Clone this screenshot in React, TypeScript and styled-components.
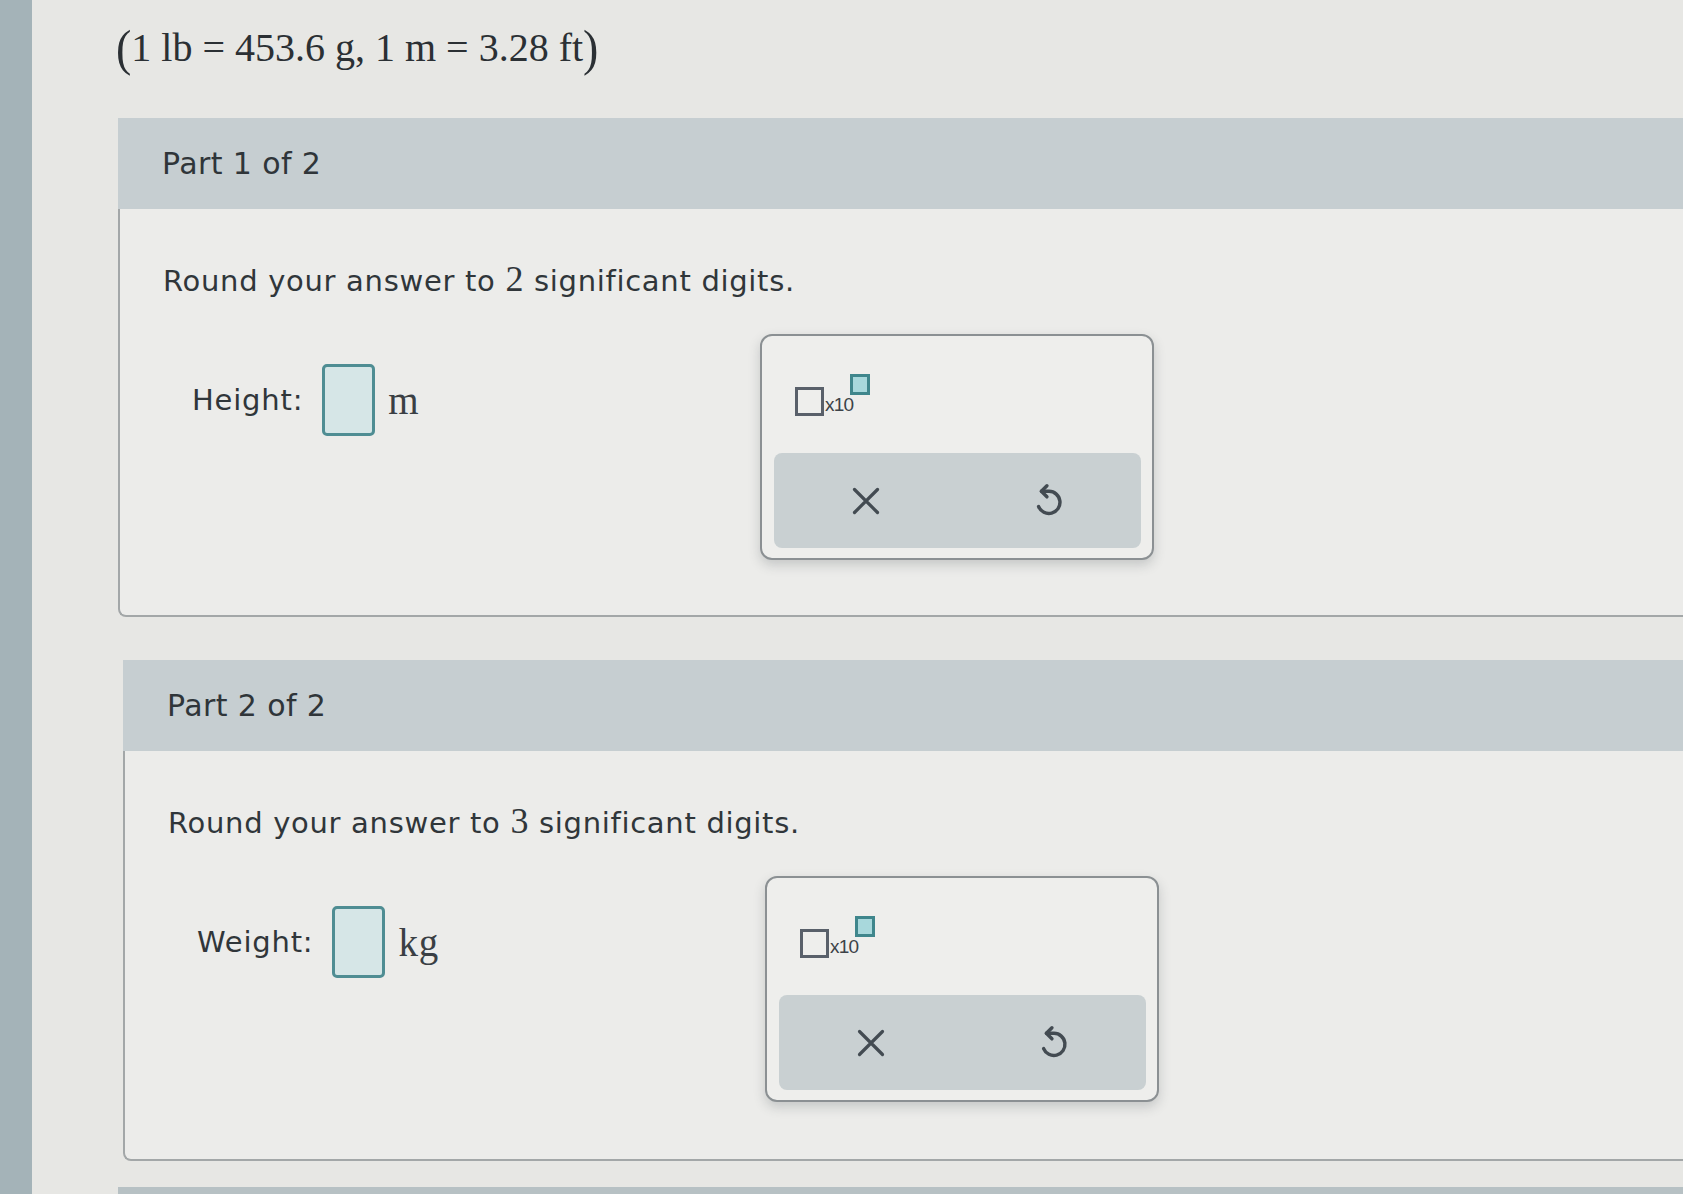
import React from "react";
import styled, { createGlobalStyle } from "styled-components";

const GlobalStyle = createGlobalStyle`
  html, body {
    margin: 0;
    padding: 0;
    background: #e7e7e4;
    overflow: hidden;
  }
  body {
    font-family: "DejaVu Sans", Verdana, sans-serif;
    color: #30363a;
  }
`;

const Page = styled.div`
  display: flex;
  width: 1683px;
  height: 1194px;
  overflow: hidden;
`;

const SideStrip = styled.div`
  flex: 0 0 32px;
  background: #a4b3b8;
`;

const Main = styled.main`
  flex: 1;
  display: flex;
  flex-direction: column;
  padding-left: 86px;
  overflow: hidden;
`;

const Formula = styled.div`
  font-family: "Liberation Serif", "Times New Roman", serif;
  font-size: 40px;
  line-height: 52px;
  padding-top: 22px;
  margin-left: -2px;
  color: #2b3034;
  display: flex;
  align-items: center;
  white-space: pre;
`;

const Paren = styled.span`
  font-size: 46px;
  transform: scaleY(1.12);
  display: inline-block;
`;

const Section = styled.section<{ $gap: number; $shift: number }>`
  margin-top: ${(p) => p.$gap}px;
  margin-left: ${(p) => p.$shift}px;
  margin-right: -30px;
  display: flex;
  flex-direction: column;
`;

const PartHeader = styled.div`
  height: 91px;
  background: #c6ced1;
  display: flex;
  align-items: center;
  padding-left: 44px;
  font-size: 30px;
  letter-spacing: 0.4px;
  color: #2f3539;
`;

const PartBody = styled.div<{ $height: number }>`
  height: ${(p) => p.$height}px;
  box-sizing: border-box;
  background: #ececea;
  border-left: 2px solid #a3a7a8;
  border-bottom: 2px solid #a3a7a8;
  border-bottom-left-radius: 8px;
  padding: 52px 0 0 43px;
  display: flex;
  flex-direction: column;
`;

const Instruction = styled.p`
  margin: 0;
  font-size: 29px;
  line-height: 36px;
  letter-spacing: 0.7px;
`;

const MathNum = styled.span`
  font-family: "Liberation Serif", "Times New Roman", serif;
  font-size: 36px;
`;

const AnswerRow = styled.div`
  margin-top: 35px;
  display: grid;
  grid-template-columns: 597px 394px;
  align-items: start;
`;

const AnswerLine = styled.div`
  margin-top: 30px;
  padding-left: 29px;
  display: flex;
  align-items: center;
  gap: 19px;
  font-size: 29px;
  letter-spacing: 0.8px;
`;

const AnswerBox = styled.div`
  width: 53px;
  height: 72px;
  box-sizing: border-box;
  border: 3px solid #4f8d93;
  border-radius: 5px;
  background: #d6e6e7;
`;

const Unit = styled.span`
  font-family: "Liberation Serif", "Times New Roman", serif;
  font-size: 39px;
  margin-left: -6px;
  color: #3a3f44;
`;

const Widget = styled.div`
  width: 394px;
  height: 226px;
  box-sizing: border-box;
  border: 2px solid #8b9093;
  border-radius: 12px;
  background: #eeeeec;
  box-shadow: 0 5px 12px rgba(60, 70, 75, 0.22);
  display: flex;
  flex-direction: column;
  padding: 38px 11px 10px 12px;
`;

const SciNotation = styled.div`
  display: flex;
  align-items: flex-start;
  margin-left: 21px;
  height: 79px;
`;

const BaseBox = styled.div`
  margin-top: 13px;
  width: 29px;
  height: 29px;
  box-sizing: border-box;
  border: 3px solid #59606a;
`;

const TimesTen = styled.span`
  margin-top: 20px;
  margin-left: 1px;
  font-family: "Liberation Sans", Arial, sans-serif;
  font-size: 19px;
  letter-spacing: -0.8px;
  color: #3c4248;
`;

const ExpBox = styled.div`
  margin-left: -3px;
  width: 20px;
  height: 21px;
  box-sizing: border-box;
  border: 3px solid #3f868c;
  background: #a8d8dc;
`;

const ActionBar = styled.div`
  flex: 1;
  border-radius: 8px;
  background: #c9d0d2;
  display: grid;
  grid-template-columns: 1fr 1fr;
`;

const ActionButton = styled.button`
  border: none;
  background: transparent;
  display: flex;
  align-items: center;
  justify-content: center;
  padding: 0;
  color: #434b52;
  cursor: pointer;
`;

const BottomBand = styled.div`
  margin-top: 26px;
  height: 12px;
  background: #b7c1c4;
`;

const ClearIcon = () => (
  <svg width="30" height="30" viewBox="0 0 30 30" fill="none" stroke="currentColor" strokeWidth="3.2" strokeLinecap="round">
    <path d="M3.5 3.5 L26.5 26.5 M26.5 3.5 L3.5 26.5" />
  </svg>
);

const UndoIcon = () => (
  <svg width="34" height="36" viewBox="0 0 24 26" fill="none" stroke="currentColor" strokeWidth="2.5" strokeLinecap="round" strokeLinejoin="round">
    <path d="M10.5 2 L6.5 6 L10.5 10" />
    <path d="M6.5 6 H12 A8 8 0 1 1 4.5 17" />
  </svg>
);

const AnswerWidget = () => (
  <Widget>
    <SciNotation>
      <BaseBox />
      <TimesTen>x10</TimesTen>
      <ExpBox />
    </SciNotation>
    <ActionBar>
      <ActionButton aria-label="Clear">
        <ClearIcon />
      </ActionButton>
      <ActionButton aria-label="Undo">
        <UndoIcon />
      </ActionButton>
    </ActionBar>
  </Widget>
);

type PartProps = {
  gap: number;
  shift: number;
  title: string;
  digits: number;
  label: string;
  unit: string;
  height: number;
};

const Part = ({ gap, shift, title, digits, label, unit, height }: PartProps) => (
  <Section $gap={gap} $shift={shift}>
    <PartHeader>{title}</PartHeader>
    <PartBody $height={height}>
      <Instruction>
        Round your answer to <MathNum>{digits}</MathNum> significant digits.
      </Instruction>
      <AnswerRow>
        <AnswerLine>
          <span>{label}</span>
          <AnswerBox />
          <Unit>{unit}</Unit>
        </AnswerLine>
        <AnswerWidget />
      </AnswerRow>
    </PartBody>
  </Section>
);

export default function App() {
  return (
    <>
      <GlobalStyle />
      <Page>
        <SideStrip />
        <Main>
          <Formula>
            <Paren>(</Paren>1 lb = 453.6 g, 1 m = 3.28 ft<Paren>)</Paren>
          </Formula>
          <Part gap={44} shift={0} title="Part 1 of 2" digits={2} label="Height:" unit="m" height={408} />
          <Part gap={43} shift={5} title="Part 2 of 2" digits={3} label="Weight:" unit="kg" height={410} />
          <BottomBand />
        </Main>
      </Page>
    </>
  );
}
